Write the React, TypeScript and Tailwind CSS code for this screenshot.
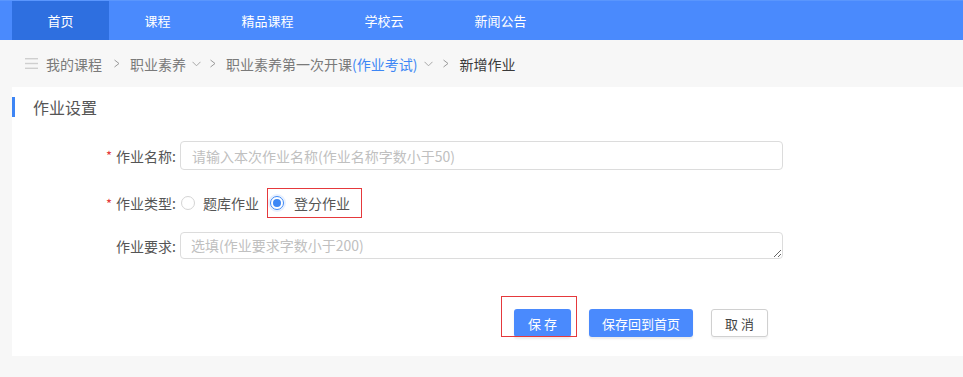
import React from "react";

const navItems = ["首页", "课程", "精品课程", "学校云", "新闻公告"];

function Chevron() {
  return (
    <svg width="9" height="6" viewBox="0 0 9 6" className="shrink-0">
      <polyline points="0.5,0.8 4.5,4.8 8.5,0.8" fill="none" stroke="#a8a8a8" strokeWidth="1" />
    </svg>
  );
}

function Sep() {
  return (
    <svg width="8" height="9" viewBox="0 0 8 9" className="shrink-0">
      <polyline points="1.5,1 6,4.5 1.5,8" fill="none" stroke="#9a9a9a" strokeWidth="1" />
    </svg>
  );
}

export default function App() {
  return (
    <div className="min-h-[377px] bg-[#f7f7f7] font-['Noto_Sans_CJK_SC','Noto_Sans',sans-serif]">
      {/* Top nav */}
      <div className="h-[40px] bg-[#4a8afd] flex pl-[12px] border-t border-[#5a96fd]">
        {navItems.map((t, i) => (
          <div
            key={t}
            className={
              "h-full flex items-center px-[35.5px] text-[13px] leading-none text-white " +
              (i === 0 ? "bg-[#2e6fe0]" : "")
            }
          >
            {t}
          </div>
        ))}
      </div>

      {/* Breadcrumb */}
      <div className="h-[47px] flex items-center pl-[25px] text-[14px] leading-none text-[#7a7a7a]">
        <svg width="13" height="11" viewBox="0 0 13 11" className="shrink-0">
          <rect x="0" y="0" width="13" height="1.4" fill="#cfcfcf" />
          <rect x="0" y="4.8" width="13" height="1.4" fill="#cfcfcf" />
          <rect x="0" y="9.6" width="13" height="1.4" fill="#cfcfcf" />
        </svg>
        <span className="ml-[8px]">我的课程</span>
        <span className="ml-[11px]"><Sep /></span>
        <span className="ml-[9px]">职业素养</span>
        <span className="ml-[6px]"><Chevron /></span>
        <span className="ml-[8px]"><Sep /></span>
        <span className="ml-[9px]">
          职业素养第一次开课<span className="text-[#3d87f5]">(作业考试)</span>
        </span>
        <span className="ml-[7px]"><Chevron /></span>
        <span className="ml-[9px]"><Sep /></span>
        <span className="ml-[9px] text-[#3a3a3a]">新增作业</span>
      </div>

      {/* Card */}
      <div className="ml-[12px] bg-white pt-[10px] pb-[19px]">
        <div className="flex items-center h-[20px]">
          <div className="w-[3px] h-[20px] bg-[#3d85f5]" />
          <div className="ml-[18px] text-[16px] leading-[20px] text-[#555]">作业设置</div>
        </div>

        <div className="mt-[24px] flex flex-col">
          {/* Row 1 */}
          <div className="flex items-center h-[29px]">
            <div className="w-[164px] flex justify-end items-center text-[14px] leading-none text-[#555]">
              <span className="text-[#e4393c] mr-[4px] text-[13px]">*</span>
              <span>作业名称:</span>
            </div>
            <input
              className="ml-[4px] w-[603px] h-[29px] border border-[#dcdcdc] rounded-[4px] px-[11px] text-[14px] text-[#333] outline-none placeholder:text-[#c0c0c0]"
              placeholder="请输入本次作业名称(作业名称字数小于50)"
            />
          </div>

          {/* Row 2 */}
          <div className="flex items-center h-[30px] mt-[18px]">
            <div className="w-[164px] flex justify-end items-center text-[14px] leading-none text-[#555]">
              <span className="text-[#e4393c] mr-[4px] text-[13px]">*</span>
              <span>作业类型:</span>
            </div>
            <div className="ml-[5px] flex items-center h-full text-[14px] leading-none text-[#555]">
              <span className="w-[14px] h-[14px] rounded-full border border-[#d4d4d4] bg-white" />
              <span className="ml-[8px]">题库作业</span>
              <div className="ml-[8px] h-[30px] flex items-center border border-[#e5393c] pl-[2px] pr-[11px]">
                <span className="w-[14px] h-[14px] rounded-full border border-[#3d87f5] flex items-center justify-center shadow-[0_0_0_2px_rgba(61,135,245,0.12)]">
                  <span className="w-[8px] h-[8px] rounded-full bg-[#3d87f5]" />
                </span>
                <span className="ml-[10px]">登分作业</span>
              </div>
            </div>
          </div>

          {/* Row 3 */}
          <div className="flex items-start mt-[14px]">
            <div className="w-[164px] h-[27px] flex justify-end items-center text-[14px] leading-none text-[#555]">
              <span>作业要求:</span>
            </div>
            <textarea
              className="ml-[4px] w-[603px] h-[27px] border border-[#dcdcdc] rounded-[4px] px-[10px] py-[3px] text-[14px] leading-[19px] text-[#333] outline-none placeholder:text-[#c0c0c0] block"
              placeholder="选填(作业要求字数小于200)"
            />
          </div>

          {/* Buttons */}
          <div className="flex items-center mt-[50px] pl-[502px] text-[13px] leading-none">
            <div className="relative">
              <div className="absolute left-[-13px] top-[-13px] w-[76px] h-[41px] border border-[#e5393c] pointer-events-none" />
              <button className="w-[57px] h-[28px] rounded-[3px] bg-[#4a8afd] text-white shadow-[0_2px_2px_rgba(0,0,0,0.08)]">
                保 存
              </button>
            </div>
            <button className="ml-[18px] w-[104px] h-[28px] rounded-[3px] bg-[#4a8afd] text-white shadow-[0_2px_2px_rgba(0,0,0,0.08)]">
              保存回到首页
            </button>
            <button className="ml-[18px] w-[57px] h-[28px] rounded-[3px] bg-white border border-[#d0d0d0] text-[#444] shadow-[0_2px_2px_rgba(0,0,0,0.05)]">
              取 消
            </button>
          </div>
        </div>
      </div>
    </div>
  );
}
